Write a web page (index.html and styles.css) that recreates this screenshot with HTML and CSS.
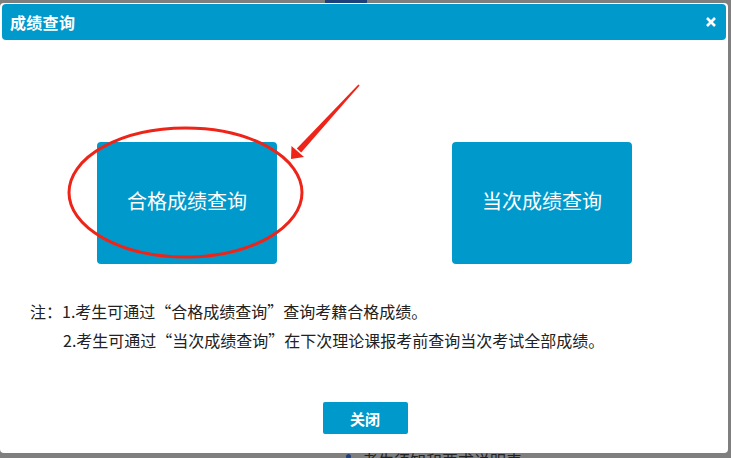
FILE: index.html
```html
<!DOCTYPE html>
<html lang="zh">
<head>
<meta charset="utf-8">
<title>成绩查询</title>
<link rel="stylesheet" href="styles.css">
</head>
<body>
<div class="topbar"><span class="topmark"></span></div>
<div class="stage">
  <div class="dialog">
    <div class="header">
      <span class="title">成绩查询</span>
      <svg class="close-x" width="10" height="10" viewBox="0 0 10 10"><path d="M1 1 L9 9 M9 1 L1 9" stroke="#fff" stroke-width="2.6" stroke-linecap="butt"/></svg>
    </div>
    <div class="content">
      <div class="choices">
        <div class="choice">合格成绩查询</div>
        <div class="choice">当次成绩查询</div>
      </div>
      <svg class="annot" width="727" height="300" viewBox="0 0 727 300">
        <ellipse cx="185.5" cy="152.5" rx="116.5" ry="64.5" fill="none" stroke="#ee2418" stroke-width="3"/>
        <polygon points="359.6,45.4 301.2,112.4 296.8,108.6 358.4,44.6" fill="#ee2418"/>
        <polygon points="291,119 291.5,106 304,117" fill="#ee2418"/>
      </svg>
      <div class="notes">
        <p>注：1.考生可通过“合格成绩查询”查询考籍合格成绩。</p>
        <p class="indent">2.考生可通过“当次成绩查询”在下次理论课报考前查询当次考试全部成绩。</p>
      </div>
      <div class="actions"><button class="btn-close">关闭</button></div>
    </div>
  </div>
  <div class="edge"></div>
</div>
<div class="below"><span class="dot"></span><span class="below-text">考生须知和要求说明表</span></div>
</body>
</html>
```
FILE: styles.css
```css
* { box-sizing: border-box; }
html, body { margin: 0; padding: 0; }
body {
  width: 731px;
  height: 458px;
  overflow: hidden;
  background: #7f7f7f;
  font-family: "Noto Sans CJK SC", "Noto Sans", sans-serif;
}
.topbar { height: 3px; display: flex; }
.topmark { width: 42px; height: 3px; margin-left: 325px; background: #1f3f7a; }
.stage { display: flex; height: 450px; }
.dialog {
  width: 728px;
  height: 450px;
  background: #fff;
  border-radius: 4px;
  padding: 1px 2px 0 2px;
  display: flex;
  flex-direction: column;
}
.edge { flex: 1; }
.header {
  height: 36px;
  background: #0099cc;
  border-radius: 4px;
  display: flex;
  align-items: center;
  justify-content: space-between;
  padding: 0 10px 0 8px;
  color: #fff;
}
.title { font-size: 16px; font-weight: bold; line-height: 20px; letter-spacing: 0.3px; }
.close-x { margin-top: -1px; }
.content { position: relative; flex: 1; }
.choices {
  display: flex;
  gap: 175px;
  padding-left: 95px;
  margin-top: 102px;
}
.choice {
  width: 180px;
  height: 122px;
  background: #0099cc;
  border-radius: 4px;
  color: #fff;
  font-size: 20px;
  display: flex;
  align-items: center;
  justify-content: center;
  padding-bottom: 6px;
}
.annot { position: absolute; left: -2px; top: 0; pointer-events: none; }
.notes { margin-top: 33px; padding-left: 28px; font-size: 16px; color: #222; }
.notes p { margin: 0; line-height: 29px; }
.notes .indent { padding-left: 33px; }
.actions { display: flex; justify-content: center; margin-top: 47px; padding-left: 2px; }
.btn-close {
  width: 85px;
  height: 32px;
  border: 0;
  border-radius: 2px;
  background: #0099cc;
  color: #fff;
  font-family: inherit;
  font-size: 15px;
  font-weight: bold;
  padding: 0;
}
.below {
  height: 5px;
  overflow: hidden;
  display: flex;
  align-items: flex-start;
  padding-left: 346px;
}
.dot { width: 5px; height: 5px; border-radius: 50%; background: #1f3f7a; margin-top: 1px; margin-right: 11px; }
.below-text { font-size: 16px; line-height: 16px; color: #222; margin-top: -1px; }
```
